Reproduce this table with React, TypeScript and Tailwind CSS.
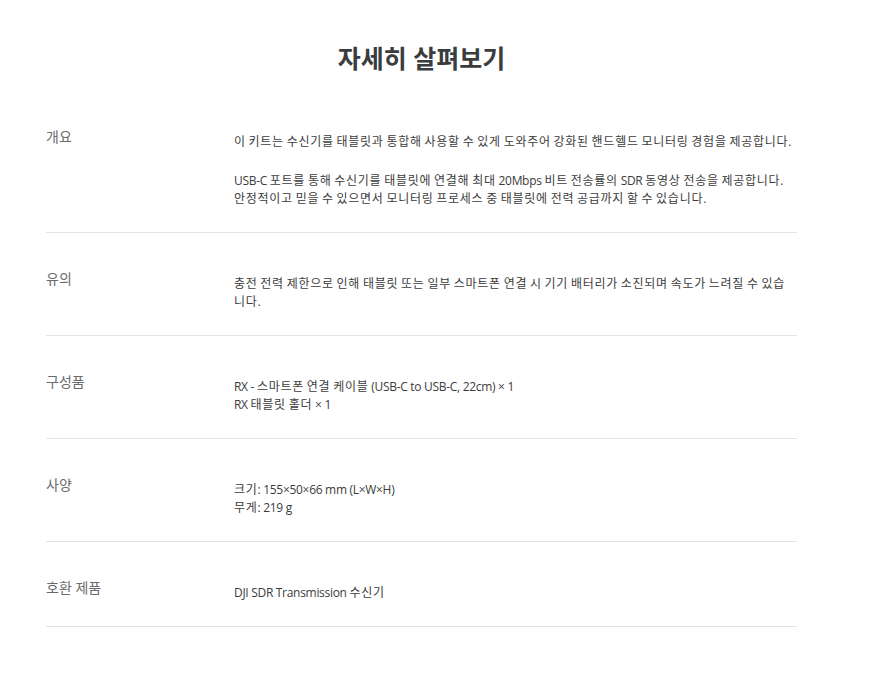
import React from 'react';

const rows: { label: string; paras: string[][] }[] = [
  {
    label: '개요',
    paras: [
      ['이 키트는 수신기를 태블릿과 통합해 사용할 수 있게 도와주어 강화된 핸드헬드 모니터링 경험을 제공합니다.'],
      [
        'USB-C 포트를 통해 수신기를 태블릿에 연결해 최대 20Mbps 비트 전송률의 SDR 동영상 전송을 제공합니다. 안정적이고 믿을 수 있으면서 모니터링 프로세스 중 태블릿에 전력 공급까지 할 수 있습니다.',
      ],
    ],
  },
  {
    label: '유의',
    paras: [['충전 전력 제한으로 인해 태블릿 또는 일부 스마트폰 연결 시 기기 배터리가 소진되며 속도가 느려질 수 있습니다.']],
  },
  {
    label: '구성품',
    paras: [['RX - 스마트폰 연결 케이블 (USB-C to USB-C, 22cm) × 1', 'RX 태블릿 홀더 × 1']],
  },
  {
    label: '사양',
    paras: [['크기: 155×50×66 mm (L×W×H)', '무게: 219 g']],
  },
  {
    label: '호환 제품',
    paras: [['DJI SDR Transmission 수신기']],
  },
];

// hangul gets a little more spacing than the latin runs
function Spaced({ text }: { text: string }) {
  const parts = text.split(/([가-힣]+)/);
  return (
    <>
      {parts.map((p, i) =>
        /[가-힣]/.test(p) ? (
          <span key={i} className="tracking-[0.72px]">
            {p}
          </span>
        ) : (
          <React.Fragment key={i}>{p}</React.Fragment>
        )
      )}
    </>
  );
}

export default function App() {
  return (
    <div
      className="min-h-[676px] bg-white"
      style={{ fontFamily: '"Open Sans", "Noto Sans CJK KR", sans-serif' }}
    >
      <div className="ml-[46px] w-[751px] pt-[40px]">
        <h2 className="text-center text-[25px] leading-[36px] font-bold text-[#3a3d40] mb-[15px]">
          자세히 살펴보기
        </h2>

        {rows.map((row) => (
          <div key={row.label} className="flex border-b border-[#e3e3e3] pt-[36px] pb-[24px]">
            <div className="w-[188px] shrink-0 text-[14px] leading-[20px] text-[#6b6b6b]">{row.label}</div>
            <div className="flex-1 mt-[6px] pr-[4px] text-[12px] leading-[18px] text-[#3c3c3c] tracking-[-0.3px]">
              {row.paras.map((lines, i) => (
                <p key={i} className={i > 0 ? 'mt-[21px]' : ''}>
                  {lines.map((l, j) => (
                    <React.Fragment key={j}>
                      {j > 0 && <br />}
                      <Spaced text={l} />
                    </React.Fragment>
                  ))}
                </p>
              ))}
            </div>
          </div>
        ))}
      </div>
    </div>
  );
}
